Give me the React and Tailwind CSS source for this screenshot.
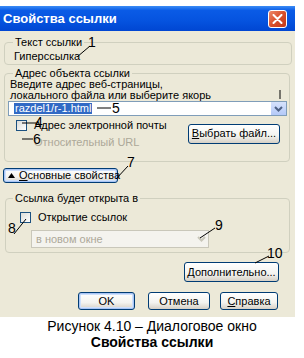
import React from "react";

function Check({ className = "" }) {
  return (
    <span
      className={
        "block w-[11px] h-[11px] border border-[#1C5180] bg-[linear-gradient(135deg,#DCDCD7,#FFFFFF)] " +
        className
      }
    />
  );
}

function XpButton({ children, className = "", focused = false }) {
  return (
    <div
      className={
        "flex items-center justify-center whitespace-nowrap rounded-[3px] border border-[#003C74] bg-[linear-gradient(to_bottom,#FFFFFF,#F3F3EF_60%,#D6D0C5)] text-black " +
        (focused ? "shadow-[inset_0_0_0_1px_#A9C5F5,inset_0_0_0_2px_#CEE0FB] " : "") +
        className
      }
    >
      {children}
    </div>
  );
}

export default function App() {
  return (
    <div className="relative w-[304px] h-[358px] bg-white overflow-hidden font-['Liberation_Sans',Arial,sans-serif] text-[11px] leading-[13px] text-black">
      <div className="mt-[6px] w-[295px] h-[311px] bg-[#ECE9D8] flex flex-col">
        {/* title bar */}
        <div className="h-[25px] flex items-center justify-between pl-[3px] pr-[8px] bg-[linear-gradient(to_bottom,#3B8CF5_0%,#0A5BE6_18%,#0553DF_60%,#0046D2_100%)]">
          <span className="text-white font-bold text-[13px] leading-[16px]">Свойства ссылки</span>
          <div className="w-[19px] h-[18px] rounded-[3px] border border-white bg-[linear-gradient(135deg,#EE8A6A,#D9502C_50%,#C2391A)] flex items-center justify-center">
            <svg width="11" height="10" viewBox="0 0 11 10">
              <path d="M1.5 1 L9.5 9 M9.5 1 L1.5 9" stroke="white" strokeWidth="2" strokeLinecap="round" />
            </svg>
          </div>
        </div>

        <div className="px-[4px] pt-[5px] flex flex-col">
          {/* group 1 */}
          <fieldset className="w-[288px] h-[29px] border border-[#D0D0BF] rounded-[4px]">
            <legend className="ml-[8px] px-[2px]">Текст ссылки</legend>
            <div className="pl-[9px] mt-[1px]">Гиперссылка</div>
          </fieldset>

          {/* group 2 */}
          <fieldset className="mt-[2px] w-[286px] h-[95px] border border-[#D0D0BF] rounded-[4px]">
            <legend className="ml-[8px] px-[2px]">Адрес объекта ссылки</legend>
            <div className="pl-[5px] leading-[11px] -mt-[1px]">
              <div>Введите адрес веб-страницы,</div>
              <div>локального файла или выберите якорь</div>
            </div>
            <div className="ml-[3px] w-[279px] h-[15px] border border-[#7F9DB9] bg-white flex items-center justify-between">
              <span className="ml-[5px] bg-[#316AC5] text-white leading-[11px] px-[1px]">razdel1/r-1.html</span>
              <span className="w-[15px] h-[13px] bg-[linear-gradient(to_bottom,#D6E2FC,#B4C9F8)] flex items-center justify-center">
                <svg width="9" height="6" viewBox="0 0 9 6">
                  <path d="M1 1 L4.5 4.5 L8 1" stroke="#4D6185" strokeWidth="2" fill="none" />
                </svg>
              </span>
            </div>
            <div className="mt-[3px] flex items-center justify-between pr-[9px]">
              <div className="flex flex-col gap-[5px] pl-[11px]">
                <div className="flex items-center gap-[7px] h-[12px]">
                  <Check />
                  <span>Адрес электронной почты</span>
                </div>
                <div className="flex items-center gap-[7px] h-[12px]">
                  <span className="w-[11px] h-[11px]" />
                  <span className="text-[#ACA899]">Относительный URL</span>
                </div>
              </div>
              <XpButton className="w-[92px] h-[20px]">
                <span>
                  <u>В</u>ыбрать файл...
                </span>
              </XpButton>
            </div>
          </fieldset>

          {/* expand button */}
          <XpButton className="mt-[6px] -ml-[1px] w-[115px] h-[15px] justify-start pl-[4px] gap-[4px]" focused>
            <svg width="7" height="5" viewBox="0 0 7 5" className="shrink-0">
              <path d="M0 5 L3.5 0 L7 5 Z" fill="black" />
            </svg>
            <span>
              <u>О</u>сновные свойства
            </span>
          </XpButton>

          {/* group 3 */}
          <fieldset className="mt-[9px] ml-[1px] w-[285px] h-[61px] border border-[#D0D0BF] rounded-[4px]">
            <legend className="ml-[7px] px-[2px]">Ссылка будет открыта в</legend>
            <div className="mt-[6px] pl-[14px] flex items-center gap-[7px] h-[13px]">
              <Check />
              <span>Открытие ссылок</span>
            </div>
            <div className="mt-[6px] ml-[25px] w-[178px] h-[18px] border border-[#C9C7BA] bg-[#F4F3EE] flex items-center justify-between">
              <span className="ml-[4px] text-[#ACA899]">в новом окне</span>
              <span className="w-[14px] h-[16px] flex items-center justify-center">
                <svg width="9" height="6" viewBox="0 0 9 6">
                  <path d="M1 1 L4.5 4.5 L8 1" stroke="#C9C7BA" strokeWidth="2" fill="none" />
                </svg>
              </span>
            </div>
          </fieldset>

          <XpButton className="mt-[9px] ml-[180px] w-[95px] h-[20px]">
            <span>
              <u>Д</u>ополнительно...
            </span>
          </XpButton>

          <div className="mt-[10px] flex items-center">
            <XpButton className="ml-[74px] w-[57px] h-[18px]" focused>
              OK
            </XpButton>
            <XpButton className="ml-[13px] w-[62px] h-[18px]">Отмена</XpButton>
            <XpButton className="ml-[10px] w-[58px] h-[18px]">
              <span>
                <u>С</u>правка
              </span>
            </XpButton>
          </div>
        </div>
      </div>

      {/* caption */}
      <div className="mt-[1px] text-center text-[14px] leading-[16px]">
        <div>Рисунок 4.10 – Диалоговое окно</div>
        <div className="font-bold">Свойства ссылки</div>
      </div>

      {/* annotation callouts */}
      <svg className="absolute left-0 top-0 pointer-events-none" width="304" height="358">
        <g stroke="black" strokeWidth="1" fill="none">
          <path d="M77 57 L90 46" />
          <path d="M97 108 L111 108" />
          <path d="M22 123 L36 123" />
          <path d="M22 139 L33 139" />
          <path d="M116 179 L128 166" />
          <path d="M280 90 L280 99" />
          <path d="M14 234 L26 219" />
          <path d="M200 238 L215 228" />
          <path d="M255 263 L269 256" />
        </g>
      </svg>
      <span className="absolute left-[88px] top-[34px] text-[14px] leading-[16px]">1</span>
      <span className="absolute left-[112px] top-[100px] text-[14px] leading-[16px]">5</span>
      <span className="absolute left-[35px] top-[114px] text-[14px] leading-[16px]">4</span>
      <span className="absolute left-[33px] top-[131px] text-[14px] leading-[16px]">6</span>
      <span className="absolute left-[127px] top-[154px] text-[14px] leading-[16px]">7</span>
      <span className="absolute left-[8px] top-[220px] text-[14px] leading-[16px]">8</span>
      <span className="absolute left-[215px] top-[217px] text-[14px] leading-[16px]">9</span>
      <span className="absolute left-[267px] top-[245px] text-[14px] leading-[16px]">10</span>
    </div>
  );
}
